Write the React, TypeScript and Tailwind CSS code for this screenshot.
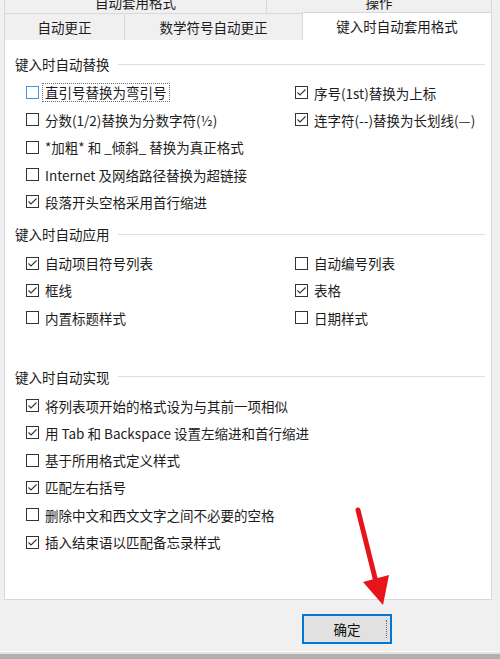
import React from "react";

type Item = { label: string; checked: boolean; hover?: boolean; focus?: boolean };

function CheckBox({ checked, hover }: { checked: boolean; hover?: boolean }) {
  return (
    <span
      className={`flex h-[13px] w-[13px] shrink-0 items-center justify-center border bg-white ${
        hover ? "border-[#4a92d9]" : "border-[#333333]"
      }`}
    >
      {checked && (
        <svg width="11" height="11" viewBox="0 0 11 11" fill="none">
          <polyline points="1.5,5.5 4,8 9.5,2.5" stroke="#333333" strokeWidth="1.1" />
        </svg>
      )}
    </span>
  );
}

function Row({ item }: { item: Item }) {
  return (
    <div className="flex h-[27.3px] items-center gap-[6px]">
      <CheckBox checked={item.checked} hover={item.hover} />
      {item.focus ? (
        <span className="-ml-[3px] border border-dotted border-[#6b6b6b] px-[2px] leading-[17px]">
          {item.label}
        </span>
      ) : (
        <span className="whitespace-nowrap leading-[20px]">{item.label}</span>
      )}
    </div>
  );
}

function Header({ title, className = "" }: { title: string; className?: string }) {
  return (
    <div className={`flex h-[20px] items-center pl-[10px] pr-[6px] ${className}`}>
      <span className="whitespace-nowrap leading-[20px]">{title}</span>
      <span className="ml-[8px] h-px flex-1 bg-[#dedede]" />
    </div>
  );
}

function TwoCols({ left, right, className = "" }: { left: Item[]; right: Item[]; className?: string }) {
  return (
    <div className={`flex pl-[21px] ${className}`}>
      <div className="flex w-[269px] flex-col">
        {left.map((it) => (
          <Row key={it.label} item={it} />
        ))}
      </div>
      <div className="flex flex-1 flex-col">
        {right.map((it) => (
          <Row key={it.label} item={it} />
        ))}
      </div>
    </div>
  );
}

export default function App() {
  const replaceLeft: Item[] = [
    { label: "直引号替换为弯引号", checked: false, hover: true, focus: true },
    { label: "分数(1/2)替换为分数字符(½)", checked: false },
    { label: "*加粗* 和 _倾斜_ 替换为真正格式", checked: false },
    { label: "Internet 及网络路径替换为超链接", checked: false },
    { label: "段落开头空格采用首行缩进", checked: true },
  ];
  const replaceRight: Item[] = [
    { label: "序号(1st)替换为上标", checked: true },
    { label: "连字符(--)替换为长划线(—)", checked: true },
  ];
  const applyLeft: Item[] = [
    { label: "自动项目符号列表", checked: true },
    { label: "框线", checked: true },
    { label: "内置标题样式", checked: false },
  ];
  const applyRight: Item[] = [
    { label: "自动编号列表", checked: false },
    { label: "表格", checked: true },
    { label: "日期样式", checked: false },
  ];
  const doItems: Item[] = [
    { label: "将列表项开始的格式设为与其前一项相似", checked: true },
    { label: "用 Tab 和 Backspace 设置左缩进和首行缩进", checked: true },
    { label: "基于所用格式定义样式", checked: false },
    { label: "匹配左右括号", checked: true },
    { label: "删除中文和西文文字之间不必要的空格", checked: false },
    { label: "插入结束语以匹配备忘录样式", checked: true },
  ];

  return (
    <div className="relative h-[659px] w-[500px] overflow-hidden bg-[#f0f0f0] font-['Noto_Sans_CJK_SC','Microsoft_YaHei',sans-serif] text-[13.5px] text-[#1c1c1c]">
      {/* upper tab row, cut off */}
      <div className="ml-[4px] flex h-[13px] w-[488px] overflow-hidden">
        <div className="w-[263px] border-x border-[#d9d9d9] text-center">
          <div className="-mt-[8px] leading-[20px]">自动套用格式</div>
        </div>
        <div className="flex-1 border-r border-[#d9d9d9] text-center">
          <div className="-mt-[8px] leading-[20px]">操作</div>
        </div>
      </div>

      {/* lower tab row */}
      <div className="ml-[4px] flex h-[27px] w-[488px] items-stretch">
        <div className="flex w-[121px] items-center justify-center border-x border-t border-[#d9d9d9]">
          自动更正
        </div>
        <div className="flex w-[177px] items-center justify-center border-t border-[#d9d9d9]">
          数学符号自动更正
        </div>
        <div className="-mt-[1px] flex flex-1 items-center justify-center border-x border-t border-[#d9d9d9] bg-white">
          键入时自动套用格式
        </div>
      </div>

      {/* panel */}
      <div className="ml-[4px] h-[560px] w-[488px] border-x border-b border-[#d9d9d9] bg-white pt-[14px]">
        <Header title="键入时自动替换" />
        <TwoCols left={replaceLeft} right={replaceRight} className="mt-[5px]" />

        <Header title="键入时自动应用" className="mt-[9px]" />
        <TwoCols left={applyLeft} right={applyRight} className="mt-[5px]" />

        <Header title="键入时自动实现" className="mt-[35.5px]" />
        <div className="mt-[5px] flex flex-col pl-[21px]">
          {doItems.map((it) => (
            <Row key={it.label} item={it} />
          ))}
        </div>
      </div>

      {/* footer */}
      <div className="h-[51px] pl-[302px] pt-[14px]">
        <button className="relative flex h-[30px] w-[90px] items-center justify-center border-2 border-[#0078d7] bg-[#e1e1e1] leading-[20px] text-[#111]">
          确定
          <span className="absolute bottom-[4px] right-[3px] top-[4px] w-px border-l border-dotted border-[#5a6b80]" />
        </button>
      </div>
      <div className="h-px bg-[#fafafa]" />
      <div className="h-[2px] bg-[#e4e4e4]" />
      <div className="h-[5px] bg-[#b0b0b0]" />

      {/* red annotation arrow */}
      <svg className="pointer-events-none absolute left-0 top-0" width="500" height="659" viewBox="0 0 500 659">
        <line x1="358" y1="510" x2="376" y2="582" stroke="#e8141b" strokeWidth="5" strokeLinecap="round" />
        <polygon points="363,582 389,575 383,605" fill="#e8141b" />
      </svg>
    </div>
  );
}
